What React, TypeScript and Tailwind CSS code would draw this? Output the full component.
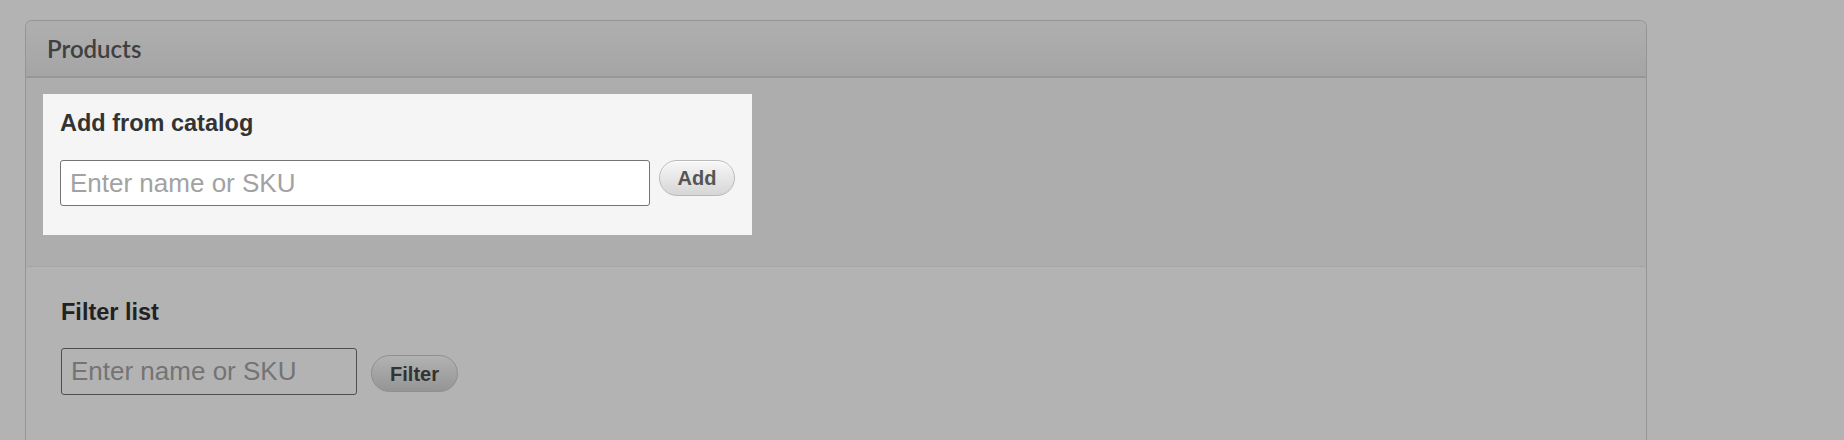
export default function App() {
  return (
    <div className="min-h-screen w-full overflow-hidden bg-[#b3b3b3] pt-5 pl-[25px]" style={{ fontFamily: '"Liberation Sans", Arial, sans-serif' }}>
      <div className="w-[1622px] rounded-t-[7px] border border-b-0 border-[#959595]">
        {/* HEADER */}
        <div className="flex h-[57px] items-center rounded-t-[6px] border-b-2 border-[#979797] bg-gradient-to-b from-[#afafaf] to-[#a5a5a5] pl-[21px]">
          <h2 className="text-[24px] font-semibold text-[#404040]" style={{ fontFamily: 'Lato, "Liberation Sans", sans-serif' }}>
            Products
          </h2>
        </div>

        {/* ADD FROM CATALOG */}
        <div className="border-b border-[#a5a5a5] bg-[#adadad] pt-[16px] pb-[31px] pl-[17px]">
          <div className="inline-flex flex-col bg-[#f5f5f5] px-[17px] pt-[16px] pb-[29px]">
            <h3 className="text-[23.5px] leading-[26px] font-bold text-[#333]">Add from catalog</h3>
            <div className="mt-[24px] flex items-start gap-[9px]">
              <input
                type="text"
                placeholder="Enter name or SKU"
                className="h-[46px] w-[590px] rounded-[3px] border border-[#747474] bg-white px-[9px] text-[26px] text-[#333] outline-none placeholder:text-[#a2a2a2]"
              />
              <button className="h-[36px] w-[76px] rounded-full border border-[#b9b9b9] bg-gradient-to-b from-[#f7f7f7] to-[#d6d6d6] text-[20px] font-bold text-[#555] shadow-[inset_0_1px_0_#fff]">
                Add
              </button>
            </div>
          </div>
        </div>

        {/* FILTER LIST */}
        <div className="bg-[#b3b3b3] pt-[32px] pb-[60px] pl-[35px]">
          <h3 className="text-[23.5px] leading-[26px] font-bold text-[#222]">Filter list</h3>
          <div className="mt-[23px] flex items-start gap-[14px]">
            <input
              type="text"
              placeholder="Enter name or SKU"
              className="h-[47px] w-[296px] rounded-[3px] border border-[#4f4f4f] bg-[#b3b3b3] px-[9px] text-[26px] text-[#333] outline-none placeholder:text-[#747474]"
            />
            <button className="mt-[7px] h-[37px] w-[87px] rounded-full border border-[#8f8f8f] bg-gradient-to-b from-[#b2b2b2] to-[#959595] text-[20px] font-bold text-[#333]">
              Filter
            </button>
          </div>
        </div>
      </div>
    </div>
  );
}
